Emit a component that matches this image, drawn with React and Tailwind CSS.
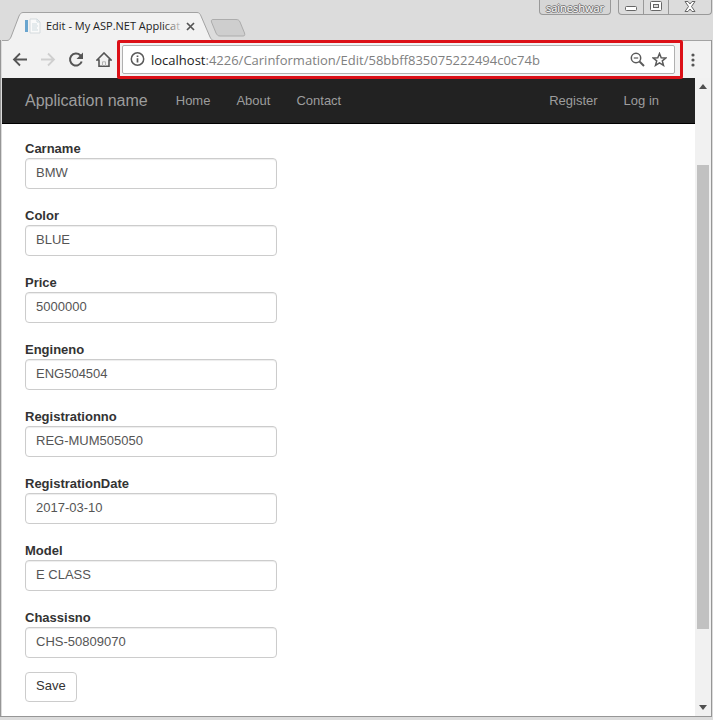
const fields = [
  { name: 'Carname', value: 'BMW' },
  { name: 'Color', value: 'BLUE' },
  { name: 'Price', value: '5000000' },
  { name: 'Engineno', value: 'ENG504504' },
  { name: 'Registrationno', value: 'REG-MUM505050' },
  { name: 'RegistrationDate', value: '2017-03-10' },
  { name: 'Model', value: 'E CLASS' },
  { name: 'Chassisno', value: 'CHS-50809070' },
]

function TitleBar() {
  return (
    <div className="flex h-10 items-start justify-between">
      <div className="flex h-10 items-end pl-[7px]">
        <div className="relative z-10 flex h-7 w-[207px] items-center pl-[18px]">
          <svg className="absolute left-0 top-0 h-[29px] w-[207px]" viewBox="0 0 207 29" fill="none">
            <path d="M0 29V28.5C2 28.5 3 27 4 25L12 4C13 2 14 .5 16 .5H190C192 .5 193 1.500 194 4L203 25C204 27 205 28.500 207 28.500V29Z" fill="#f2f2f2" />
            <path d="M0 28.5C2 28.5 3 27 4 25L12 4C13 2 14 .5 16 .5H190C192 .5 193 1.500 194 4L203 25C204 27 205 28.500 207 28.500" stroke="#a3a3a3" />
          </svg>
          <svg className="relative h-4 w-4 shrink-0" viewBox="0 0 16 16">
            <path d="M5 1h7l3 3v11H5z" fill="#fafafa" stroke="#d4dadd" />
            <path d="M12 1v3h3M7 6h5M7 8h6M7 10h5M7 12h6" fill="none" stroke="#cfdbe0" />
            <path d="M0 2h3v12H0z" fill="#69a5cf" />
          </svg>
          <div className="relative ml-[5px] w-[138px] whitespace-nowrap font-['Open_Sans',sans-serif] text-[11px] leading-4 text-[#222]">
            Edit - My ASP.NET Applicat
            <span className="absolute inset-y-0 right-0 w-5 bg-linear-to-r from-transparent to-[#f2f2f2]" />
          </div>
          <button type="button" aria-label="Close tab" className="relative ml-[2px]">
            <svg className="h-[9px] w-[9px]" viewBox="0 0 9 9" stroke="#555" strokeWidth="1.7">
              <path d="M1 1l7 7M8 1l-7 7" />
            </svg>
          </button>
        </div>
        <button type="button" aria-label="New tab" className="mb-[3px] -ml-1">
          <svg className="h-[18px] w-9" viewBox="0 0 36 18" fill="#cecece" stroke="#acacac">
            <path d="M3 .5H26C28 .5 29 1 30 3L34.500 14C35 16 35 17 33 17H10C8 17 7 16 6 14L1.500 3C1 1.500 1.500 .5 3 .5Z" />
          </svg>
        </button>
      </div>
      <div className="flex gap-[7px] pr-px">
        <button type="button" className="h-[15px] w-[72px] rounded-b border border-t-0 border-[#999] bg-[#d6d6d6] font-['Open_Sans',sans-serif] text-[11px] leading-[13px] text-white [text-shadow:1px_0_#777,-1px_0_#777,0_1px_#777,0_-1px_#777]">
          saineshwar
        </button>
        <div className="flex h-[15px] divide-x divide-[#999] rounded-b border border-t-0 border-[#999]">
          <button type="button" aria-label="Minimize" className="flex w-[25px] items-center justify-center">
            <svg className="h-3 w-3" viewBox="0 0 12 12" fill="#fff" stroke="#666">
              <rect x=".5" y="5.500" width="11" height="4" rx="1" />
            </svg>
          </button>
          <button type="button" aria-label="Maximize" className="flex w-[25px] items-center justify-center">
            <svg className="h-3 w-3" viewBox="0 0 12 12" fill="#fff" stroke="#666">
              <rect x=".5" y=".5" width="11" height="9" rx="1" />
              <rect x="3.500" y="3.500" width="5" height="3" fill="#ddd" />
            </svg>
          </button>
          <button type="button" aria-label="Close" className="flex w-[42px] items-center justify-center">
            <svg className="h-3 w-3" viewBox="0 0 12 12" fill="#fff" stroke="#666" strokeLinejoin="round">
              <path d="M1 .5h3l2 2.500L8 .5h3L7.500 5.500 11 10.500H8L6 8 4 10.500H1l3.500-5z" />
            </svg>
          </button>
        </div>
      </div>
    </div>
  )
}

function Toolbar() {
  return (
    <div className="flex h-[38px] items-center border-t border-[#a3a3a3] bg-[#f2f2f2] pl-[10px]">
      <div className="flex items-center gap-3">
        <button type="button" aria-label="Back">
          <svg className="h-4 w-4" viewBox="0 0 16 16" fill="none" stroke="#555" strokeWidth="1.800">
            <path d="M15 7.500H2M8 1.500l-6 6 6 6" />
          </svg>
        </button>
        <button type="button" aria-label="Forward">
          <svg className="h-4 w-4" viewBox="0 0 16 16" fill="none" stroke="#cfcfcf" strokeWidth="1.800">
            <path d="M1 7.500h13M8 1.500l6 6-6 6" />
          </svg>
        </button>
        <button type="button" aria-label="Reload">
          <svg className="h-4 w-4" viewBox="0 0 16 16">
            <path d="M13.700 9.500A6 6 0 1 1 12.300 3.300L14 5" fill="none" stroke="#555" strokeWidth="2" />
            <path d="M15 .5V7H8.500z" fill="#555" />
          </svg>
        </button>
        <button type="button" aria-label="Home">
          <svg className="h-4 w-4" viewBox="0 0 16 16" fill="none" stroke="#555" strokeWidth="1.600">
            <path d="M1 8L8 1l7 7h-2v6.200H3V8z" />
            <path d="M6.500 14V9.800h3V14" stroke="#b5b5b5" strokeWidth="1" />
          </svg>
        </button>
      </div>
      <div className="relative z-10 ml-[5px] flex-1 rounded-xs border-3 border-[#dc1017] bg-[#f2f2f2] p-[2px] pr-[5px]">
        <div className="flex h-[29px] items-center rounded-xs border border-[#b0b0b0] bg-white pl-[7px] pr-[7px]">
          <svg className="h-[15px] w-[15px] shrink-0" viewBox="0 0 15 15" fill="none" stroke="#5a5a5a" strokeWidth="1.500">
            <circle cx="7.500" cy="7" r="6.200" />
            <path d="M7.500 6.200v4.300M7.500 3.500V5" strokeWidth="1.700" />
          </svg>
          <a href="#address" className="ml-[6px] flex-1 whitespace-nowrap font-['Open_Sans',sans-serif] text-[13px] leading-5 text-[#808080]">
            <span className="text-[#222]">localhost</span>:4226/Carinformation/Edit/58bbff835075222494c0c74b
          </a>
          <button type="button" aria-label="Zoom out">
            <svg className="h-[15px] w-[15px]" viewBox="0 0 15 15" fill="none" stroke="#5a5a5a" strokeWidth="1.500">
              <circle cx="6" cy="6" r="4.700" />
              <path d="M3.800 6h4.400" strokeWidth="1.200" />
              <path d="M9.500 9.500l4.500 4.500" strokeWidth="2" />
            </svg>
          </button>
          <button type="button" aria-label="Bookmark" className="ml-[7px]">
            <svg className="h-[15px] w-[15px]" viewBox="0 0 15 15" fill="none" stroke="#5a5a5a" strokeWidth="1.500">
              <path d="M7.500 1.500l1.700 4.200 4.700.3-3.600 2.900 1.200 4.500-4-2.500-4 2.500 1.200-4.500L1.100 6l4.700-.3z" />
            </svg>
          </button>
        </div>
      </div>
      <button type="button" aria-label="Menu" className="ml-2 mr-4">
        <svg className="h-[14px] w-1" viewBox="0 0 4 14" fill="#555">
          <circle cx="2" cy="2" r="1.600" />
          <circle cx="2" cy="7" r="1.600" />
          <circle cx="2" cy="12" r="1.600" />
        </svg>
      </button>
    </div>
  )
}

function Navbar() {
  return (
    <nav className="flex h-[46px] items-center border-b border-black bg-[#222] pl-[23px] pr-9 text-[13px] text-[#9d9d9d]">
      <a href="#top" className="text-base">Application name</a>
      <div className="ml-7 flex flex-1 gap-[26px]">
        <a href="#home">Home</a>
        <a href="#about">About</a>
        <a href="#contact">Contact</a>
      </div>
      <div className="flex gap-[26px]">
        <a href="#register">Register</a>
        <a href="#login">Log in</a>
      </div>
    </nav>
  )
}

function EditForm() {
  return (
    <form className="px-[23px] pb-[14px] pt-4 text-[13px]" onSubmit={(e) => e.preventDefault()}>
      <div className="flex flex-col gap-[18px]">
        {fields.map((field) => (
          <div key={field.name}>
            <label htmlFor={field.name} className="block leading-[18px] font-bold text-[#333]">
              {field.name}
            </label>
            <input
              id={field.name}
              type="text"
              defaultValue={field.value}
              className="block h-[31px] w-full max-w-[252px] rounded border border-[#ccc] bg-white px-[10px] pb-[2px] text-[#555] shadow-[inset_0_1px_1px_rgba(0,0,0,0.075)]"
            />
          </div>
        ))}
      </div>
      <button type="submit" className="mt-[14px] h-[30px] rounded border border-[#ccc] bg-white px-[10px] pb-[2px] text-[#333]">
        Save
      </button>
    </form>
  )
}

function Scrollbar() {
  return (
    <div className="flex w-4 shrink-0 flex-col items-center bg-[#f1f1f1]">
      <svg className="h-[17px] w-4" viewBox="0 0 16 17" fill="#505050">
        <path d="M8 6l4 5H4z" />
      </svg>
      <div className="flex-[70]" />
      <div className="w-3 flex-[464] bg-[#c1c1c1]" />
      <div className="flex-[70]" />
      <svg className="h-[17px] w-4" viewBox="0 0 16 17" fill="#505050">
        <path d="M8 11L4 6h8z" />
      </svg>
    </div>
  )
}

export default function App() {
  return (
    <div className="flex min-h-screen flex-col bg-[#dcdcdc] pb-[3px] font-['Liberation_Sans',Arial,sans-serif]">
      <TitleBar />
      <div className="mr-px flex flex-1 flex-col border-x border-b border-[#969696] pl-px">
        <Toolbar />
        <div className="flex flex-1 bg-white">
          <main className="min-w-0 flex-1">
            <Navbar />
            <EditForm />
          </main>
          <Scrollbar />
        </div>
      </div>
    </div>
  )
}
